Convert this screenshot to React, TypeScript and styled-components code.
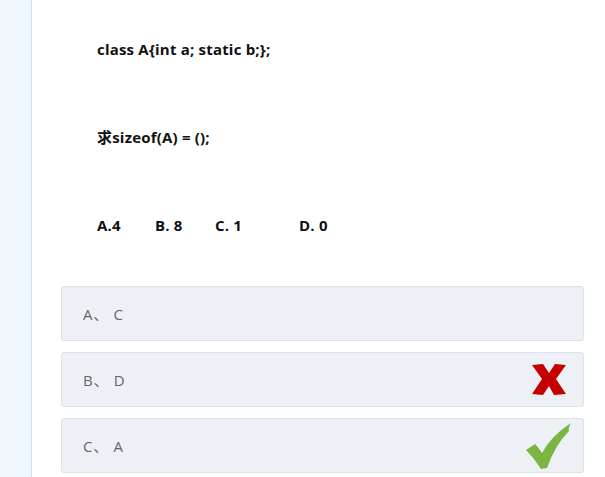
import React from 'react';
import styled, { createGlobalStyle } from 'styled-components';

const GlobalStyle = createGlobalStyle`
  html, body {
    margin: 0;
    padding: 0;
    background: #ffffff;
  }
  body {
    font-family: "Open Sans", "Noto Sans CJK SC", sans-serif;
  }
`;

const Page = styled.div`
  display: flex;
  width: 605px;
  height: 477px;
  overflow: hidden;
`;

const Sidebar = styled.div`
  width: 31px;
  flex-shrink: 0;
  background: #eff7fd;
  border-right: 1px solid #cde2f0;
`;

const Main = styled.div`
  flex: 1;
  padding: 0 21px 0 29px;
  display: flex;
  flex-direction: column;
`;

const Question = styled.div`
  padding: 39px 0 0 36px;
  display: flex;
  flex-direction: column;
  gap: 68px;
`;

const Line = styled.div`
  height: 20px;
  line-height: 20px;
  font-size: 15px;
  font-weight: 700;
  letter-spacing: 0.2px;
  color: #111;
  white-space: pre;
`;

const Choice = styled.span<{ $w: number }>`
  display: inline-block;
  width: ${p => p.$w}px;
`;

const Options = styled.div`
  margin-top: 51px;
  display: flex;
  flex-direction: column;
  gap: 11px;
`;

const Option = styled.div`
  height: 55px;
  box-sizing: border-box;
  border: 1px solid #dde2e7;
  border-radius: 3px;
  background: #edf1f5;
  display: flex;
  align-items: center;
  justify-content: space-between;
  padding: 0 9px 0 21px;
  font-size: 15px;
  color: #666;
`;

const Label = styled.span`
  letter-spacing: 0.7px;
`;

const Mark = styled.div`
  width: 50px;
  height: 50px;
  display: flex;
  align-items: center;
  justify-content: center;
`;

const Cross = () => (
  <svg width="34" height="31" viewBox="0 0 34 31">
    <polygon
      points="0,1 11,0 17,9 23,0 34,1 24,15 34,30 22,31 17,22 11,31 0,30 10,15"
      fill="#c40000"
    />
  </svg>
);

const Check = () => (
  <svg width="46" height="46" viewBox="0 0 46 46">
    <path
      d="M0 27 L9 21 Q13 25 16 30 Q25 13 45 0 Q42 5 43 8 Q29 22 21 45 L15 46 Q8 35 0 27 Z"
      fill="#7db544"
    />
  </svg>
);

const options = [
  { label: 'A、 C', mark: null },
  { label: 'B、 D', mark: 'wrong' },
  { label: 'C、 A', mark: 'right' },
];

export default function App() {
  return (
    <>
      <GlobalStyle />
      <Page>
        <Sidebar />
        <Main>
          <Question>
            <Line>class A{'{'}int a; static b;{'}'};</Line>
            <Line>求sizeof(A) = ();</Line>
            <Line>
              <Choice $w={58}>A.4</Choice>
              <Choice $w={60}>B. 8</Choice>
              <Choice $w={84}>C. 1</Choice>
              <Choice $w={40}>D. 0</Choice>
            </Line>
          </Question>
          <Options>
            {options.map(o => (
              <Option key={o.label}>
                <Label>{o.label}</Label>
                {o.mark === 'wrong' && (
                  <Mark>
                    <Cross />
                  </Mark>
                )}
                {o.mark === 'right' && (
                  <Mark>
                    <Check />
                  </Mark>
                )}
              </Option>
            ))}
          </Options>
        </Main>
      </Page>
    </>
  );
}
